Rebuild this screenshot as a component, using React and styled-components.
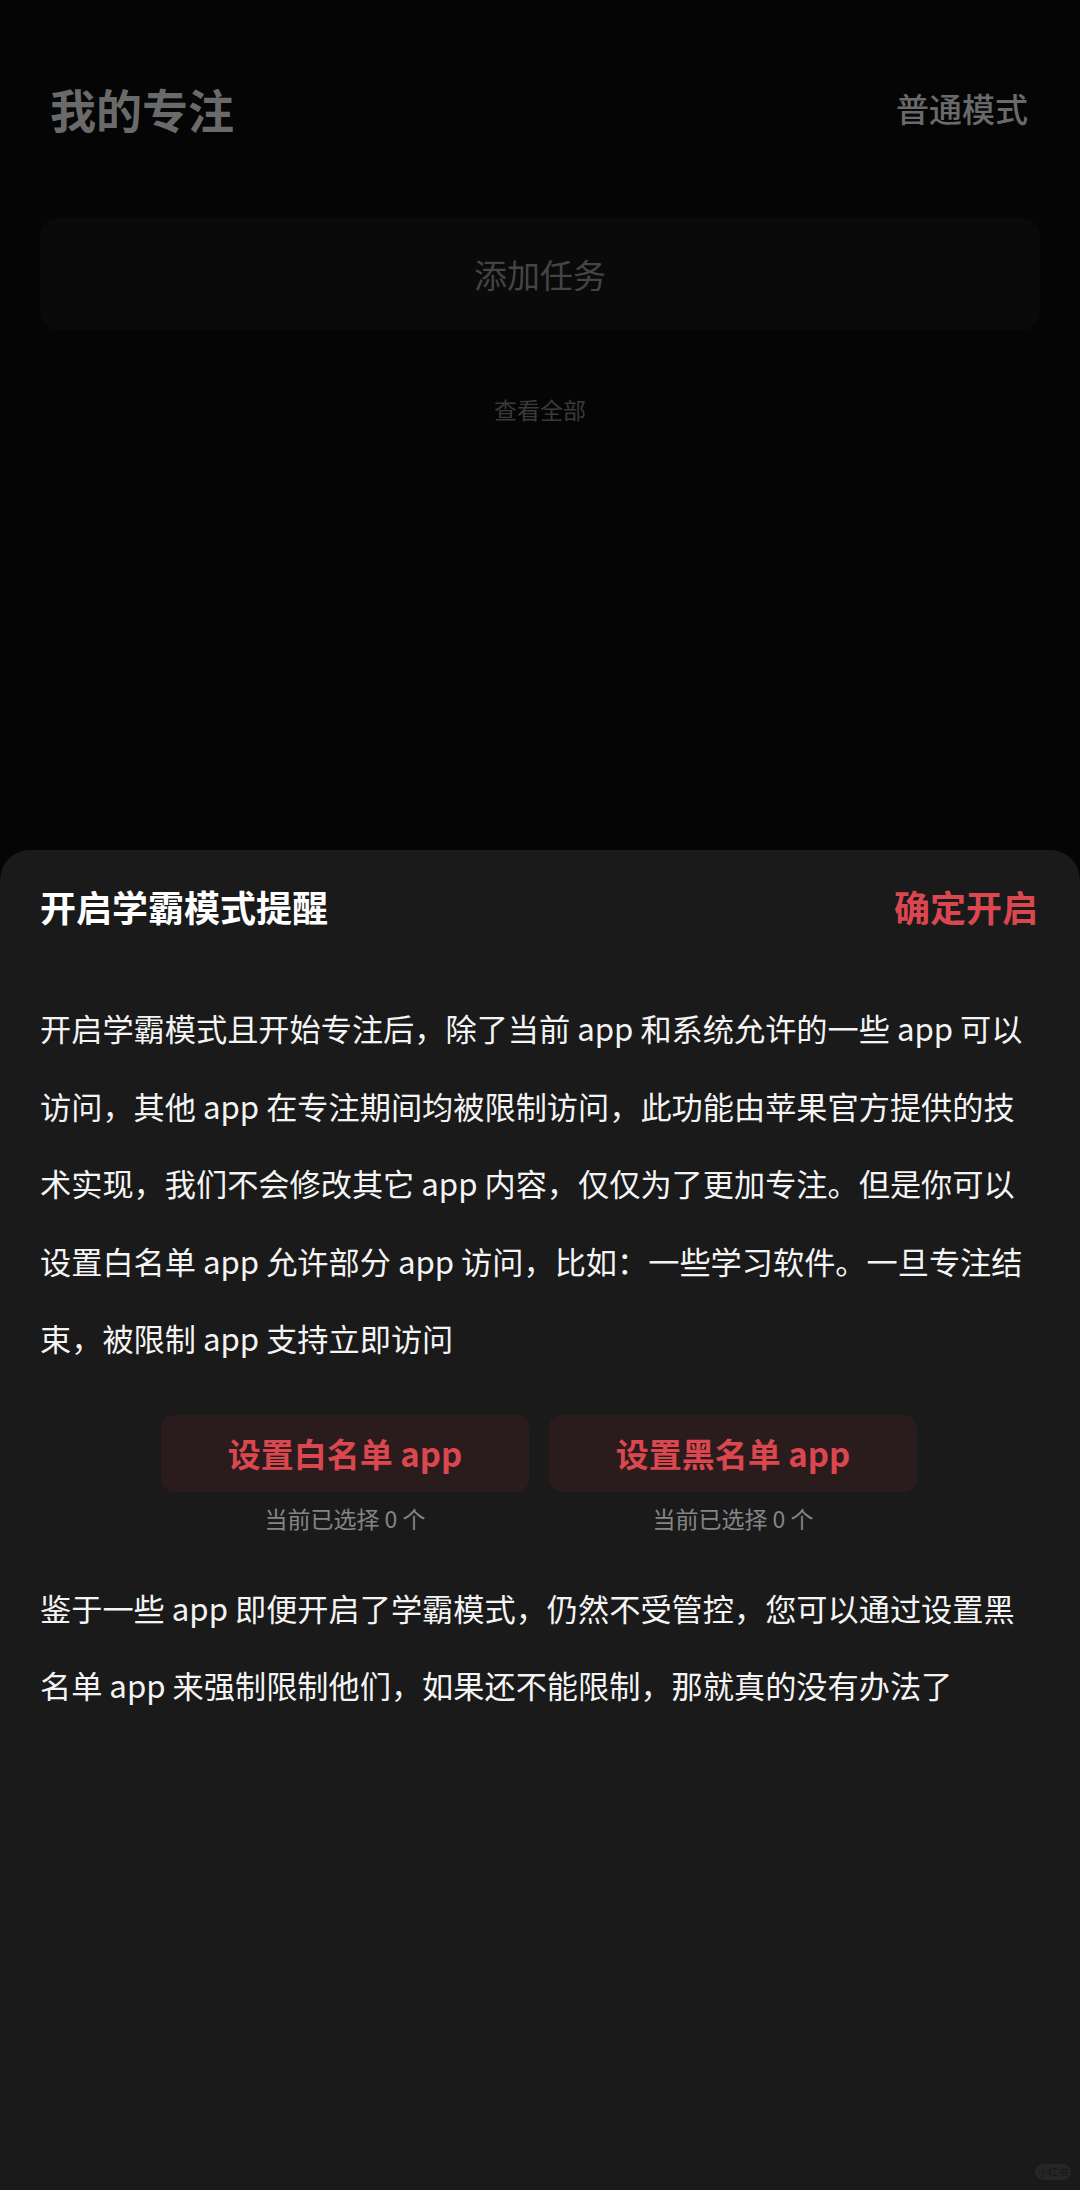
import React from 'react';
import styled, { createGlobalStyle } from 'styled-components';

const GlobalStyle = createGlobalStyle`
  html, body {
    margin: 0;
    padding: 0;
    background: #050505;
  }
  body {
    font-family: "Noto Sans CJK SC", "Noto Sans", sans-serif;
  }
`;

const Page = styled.div`
  display: flex;
  flex-direction: column;
  min-height: 2190px;
  background: #050505;
  position: relative;
`;

const Backdrop = styled.div`
  height: 850px;
  display: flex;
  flex-direction: column;
`;

const Header = styled.div`
  display: flex;
  justify-content: space-between;
  align-items: center;
  padding: 78px 52px 0 50px;
  height: 60px;
`;

const PageTitle = styled.div`
  font-size: 46px;
  font-weight: 700;
  color: #6a6a6a;
  line-height: 60px;
`;

const ModeLink = styled.div`
  font-size: 33px;
  font-weight: 500;
  color: #6a6a6a;
  line-height: 60px;
`;

const AddCard = styled.div`
  margin: 80px 40px 0;
  height: 112px;
  border-radius: 18px;
  background: #0a0a0a;
  display: flex;
  align-items: center;
  justify-content: center;
  font-size: 33px;
  color: #444;
`;

const ViewAll = styled.div`
  margin-top: 64px;
  text-align: center;
  font-size: 23px;
  line-height: 30px;
  color: #3a3a3a;
`;

const Sheet = styled.div`
  flex: 1;
  background: #1a1a1a;
  border-radius: 30px 30px 0 0;
  padding: 26px 42px 0 40px;
`;

const SheetHeader = styled.div`
  display: flex;
  justify-content: space-between;
  align-items: center;
  height: 60px;
`;

const SheetTitle = styled.div`
  font-size: 36px;
  font-weight: 700;
  color: #fff;
`;

const Confirm = styled.div`
  font-size: 36px;
  font-weight: 700;
  color: #da474f;
`;

const Text = styled.p`
  margin: ${(p) => p.$top}px 0 0;
  font-size: 31.2px;
  line-height: 77.5px;
  color: #f4f4f4;
  white-space: nowrap;
`;

const ButtonRow = styled.div`
  display: flex;
  justify-content: center;
  gap: 20px;
  margin-top: 38px;
`;

const Choice = styled.div`
  display: flex;
  flex-direction: column;
  align-items: center;
  width: 368px;
`;

const ChoiceButton = styled.div`
  width: 100%;
  height: 77px;
  border-radius: 13px;
  background: #2a1b1d;
  display: flex;
  align-items: center;
  justify-content: center;
  font-size: 33px;
  font-weight: 700;
  color: #da474f;
`;

const Count = styled.div`
  margin-top: 11px;
  font-size: 23px;
  line-height: 30px;
  color: #858585;
`;

const Watermark = styled.div`
  position: absolute;
  right: 9px;
  bottom: 10px;
  width: 36px;
  height: 16px;
  border-radius: 8px;
  background: #262626;
  color: #161616;
  font-size: 10px;
  line-height: 16px;
  text-align: center;
`;

const choices = [
  { label: '设置白名单 app', count: 0 },
  { label: '设置黑名单 app', count: 0 },
];

export default function App() {
  return (
    <Page>
      <GlobalStyle />
      <Backdrop>
        <Header>
          <PageTitle>我的专注</PageTitle>
          <ModeLink>普通模式</ModeLink>
        </Header>
        <AddCard>添加任务</AddCard>
        <ViewAll>查看全部</ViewAll>
      </Backdrop>

      <Sheet>
        <SheetHeader>
          <SheetTitle>开启学霸模式提醒</SheetTitle>
          <Confirm>确定开启</Confirm>
        </SheetHeader>

        <Text $top={53}>
          开启学霸模式且开始专注后，除了当前 app 和系统允许的一些 app 可以<br />
          访问，其他 app 在专注期间均被限制访问，此功能由苹果官方提供的技<br />
          术实现，我们不会修改其它 app 内容，仅仅为了更加专注。但是你可以<br />
          设置白名单 app 允许部分 app 访问，比如：一些学习软件。一旦专注结<br />
          束，被限制 app 支持立即访问
        </Text>

        <ButtonRow>
          {choices.map((c) => (
            <Choice key={c.label}>
              <ChoiceButton>{c.label}</ChoiceButton>
              <Count>当前已选择 {c.count} 个</Count>
            </Choice>
          ))}
        </ButtonRow>

        <Text $top={36}>
          鉴于一些 app 即便开启了学霸模式，仍然不受管控，您可以通过设置黑<br />
          名单 app 来强制限制他们，如果还不能限制，那就真的没有办法了
        </Text>
      </Sheet>
      <Watermark>小红书</Watermark>
    </Page>
  );
}
